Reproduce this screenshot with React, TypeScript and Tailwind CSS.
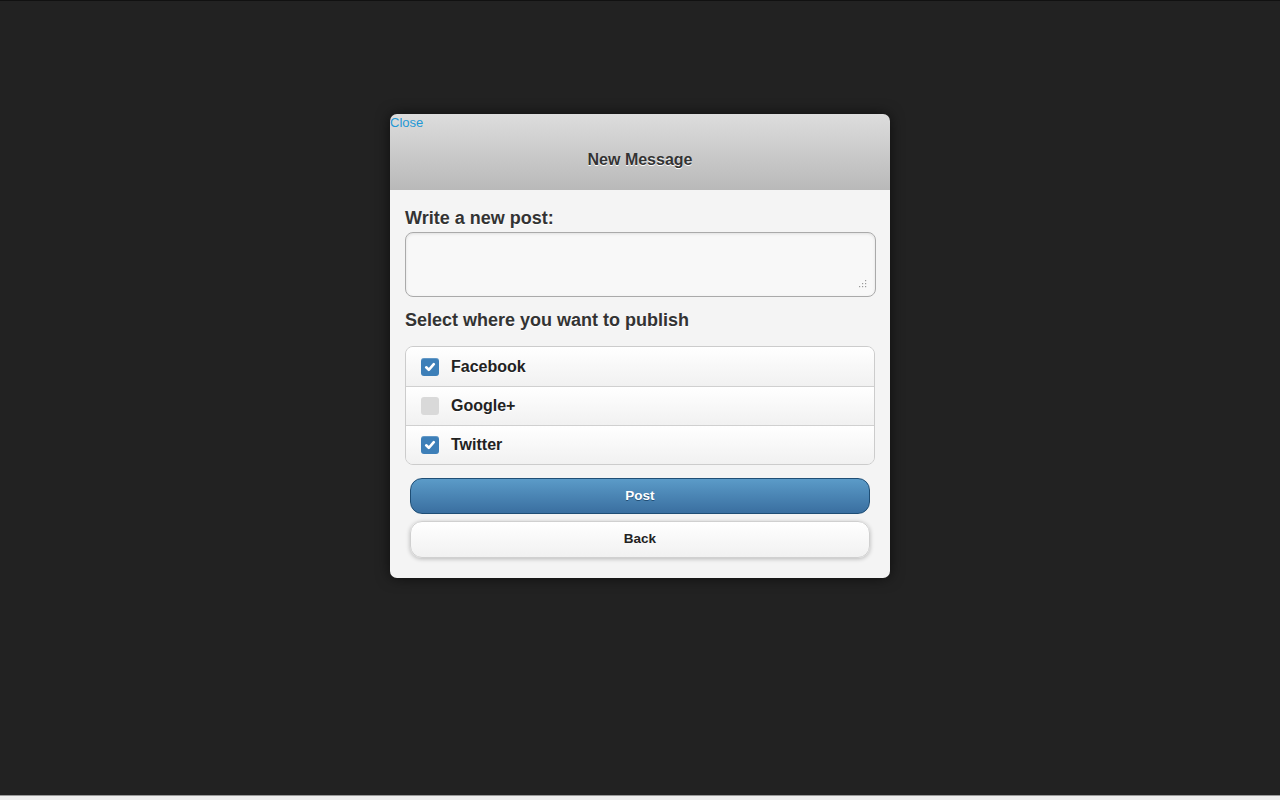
import React from "react";

const FONT = { fontFamily: '"Liberation Sans", Arial, sans-serif' };

type Item = { name: string; checked: boolean };

const ITEMS: Item[] = [
  { name: "Facebook", checked: true },
  { name: "Google+", checked: false },
  { name: "Twitter", checked: true },
];

function Check({ checked }: { checked: boolean }) {
  if (!checked) {
    return <span className="h-[18px] w-[18px] rounded-[3px] bg-[#d9d9d9]" />;
  }
  return (
    <span className="flex h-[18px] w-[18px] items-center justify-center rounded-[3px] bg-[#3d7fb8] shadow-[inset_0_1px_0_rgba(255,255,255,0.2)]">
      <svg width="12" height="12" viewBox="0 0 12 12">
        <path d="M2.2 6.3 L4.8 8.8 L9.8 3.2" fill="none" stroke="#fff" strokeWidth="2.6" strokeLinecap="round" strokeLinejoin="round" />
      </svg>
    </span>
  );
}

export default function App() {
  return (
    <div className="flex h-[800px] w-full flex-col bg-[#eeeeee]" style={FONT}>
      <div className="flex flex-1 items-start justify-center border-t border-b border-t-[#111] border-b-[#9a9a9a] bg-[#222222] pt-[113px]">
        <div className="flex w-[500px] flex-col overflow-hidden rounded-[7px] shadow-[0_0_14px_rgba(0,0,0,0.6)]">
          {/* header */}
          <div className="flex h-[76px] flex-col bg-gradient-to-b from-[#dddddd] to-[#b9b9b9]">
            <a className="self-start text-[13px] leading-[18px] text-[#1f98d6]">Close</a>
            <div className="mt-[16px] text-center text-[16px] font-bold text-[#333] [text-shadow:0_1px_0_#fff]">
              New Message
            </div>
          </div>

          {/* body */}
          <div className="flex flex-col bg-[#f4f4f4] px-[15px] pb-[20px] pt-[17px]">
            <label className="text-[18px] font-bold leading-[22px] text-[#333] [text-shadow:0_1px_0_#fff]">
              Write a new post:
            </label>
            <div className="relative mt-[3px] h-[65px] w-[471px] rounded-[8px] border border-[#aaaaaa] bg-[#f8f8f8] shadow-[inset_0_1px_3px_rgba(0,0,0,0.1)]">
              <svg className="absolute bottom-[6px] right-[8px]" width="10" height="10" viewBox="0 0 10 10">
                <g fill="#999">
                  <rect x="8" y="0" width="1.2" height="1.2" />
                  <rect x="5" y="3" width="1.2" height="1.2" />
                  <rect x="8" y="3" width="1.2" height="1.2" />
                  <rect x="2" y="6" width="1.2" height="1.2" />
                  <rect x="5" y="6" width="1.2" height="1.2" />
                  <rect x="8" y="6" width="1.2" height="1.2" />
                </g>
              </svg>
            </div>

            <div className="mt-[12px] text-[18px] font-bold leading-[22px] text-[#333] [text-shadow:0_1px_0_#fff]">
              Select where you want to publish
            </div>

            <div className="mt-[15px] w-[470px] overflow-hidden rounded-[8px] border border-[#cccccc]">
              {ITEMS.map((it, i) => (
                <div
                  key={it.name}
                  className={`flex h-[39px] items-center gap-[12px] bg-gradient-to-b from-[#ffffff] to-[#f1f1f1] pl-[15px] ${
                    i > 0 ? "border-t border-[#d0d0d0]" : ""
                  }`}
                >
                  <Check checked={it.checked} />
                  <span className="text-[16px] font-bold text-[#222] [text-shadow:0_1px_0_#fff]">{it.name}</span>
                </div>
              ))}
            </div>

            <div className="mt-[13px] flex flex-col gap-[7px] px-[5px]">
              <button className="h-[36px] w-full rounded-[12px] border border-[#1f4e75] bg-gradient-to-b from-[#5b9bc8] to-[#3a6fa0] text-[13.5px] font-bold text-white [text-shadow:0_1px_0_#1f4e75]">
                Post
              </button>
              <button className="h-[37px] w-full rounded-[12px] border border-[#d0d0d0] bg-gradient-to-b from-[#ffffff] to-[#f1f1f1] text-[13.5px] font-bold text-[#222] shadow-[0_1px_4px_rgba(0,0,0,0.25)]">
                Back
              </button>
            </div>
          </div>
        </div>
      </div>
      <div className="h-[4px]" />
    </div>
  );
}
